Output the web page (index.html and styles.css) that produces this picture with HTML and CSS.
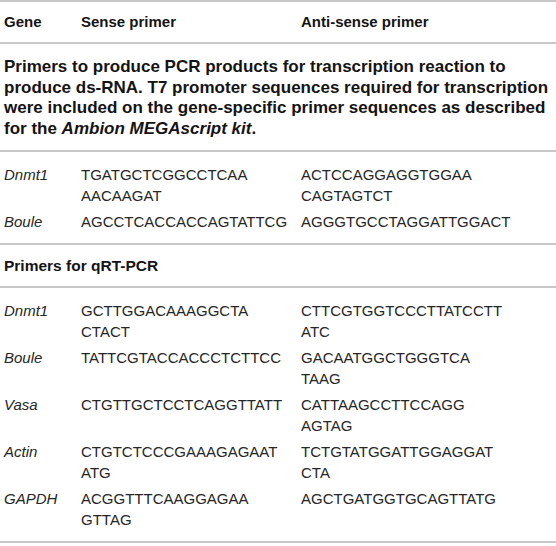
FILE: index.html
```html
<!DOCTYPE html>
<html lang="en">
<head>
<meta charset="utf-8">
<title>Primer table</title>
<link rel="stylesheet" href="styles.css">
</head>
<body>
<div class="table">
  <div class="row head">
    <div class="c1">Gene</div>
    <div class="c2">Sense primer</div>
    <div class="c3">Anti-sense primer</div>
  </div>
  <div class="section para">Primers to produce PCR products for transcription reaction to<br>produce ds-RNA. T7 promoter sequences required for transcription<br>were included on the gene-specific primer sequences as described<br>for the <em>Ambion MEGAscript kit</em>.</div>
  <div class="group">
    <div class="row">
      <div class="c1 gene">Dnmt1</div>
      <div class="c2">TGATGCTCGGCCTCAA<br>AACAAGAT</div>
      <div class="c3">ACTCCAGGAGGTGGAA<br>CAGTAGTCT</div>
    </div>
    <div class="row">
      <div class="c1 gene">Boule</div>
      <div class="c2">AGCCTCACCACCAGTATTCG</div>
      <div class="c3">AGGGTGCCTAGGATTGGACT</div>
    </div>
  </div>
  <div class="section title">Primers for qRT-PCR</div>
  <div class="group">
    <div class="row">
      <div class="c1 gene">Dnmt1</div>
      <div class="c2">GCTTGGACAAAGGCTA<br>CTACT</div>
      <div class="c3">CTTCGTGGTCCCTTATCCTT<br>ATC</div>
    </div>
    <div class="row">
      <div class="c1 gene">Boule</div>
      <div class="c2">TATTCGTACCACCCTCTTCC</div>
      <div class="c3">GACAATGGCTGGGTCA<br>TAAG</div>
    </div>
    <div class="row">
      <div class="c1 gene">Vasa</div>
      <div class="c2">CTGTTGCTCCTCAGGTTATT</div>
      <div class="c3">CATTAAGCCTTCCAGG<br>AGTAG</div>
    </div>
    <div class="row">
      <div class="c1 gene">Actin</div>
      <div class="c2">CTGTCTCCCGAAAGAGAAT<br>ATG</div>
      <div class="c3">TCTGTATGGATTGGAGGAT<br>CTA</div>
    </div>
    <div class="row">
      <div class="c1 gene">GAPDH</div>
      <div class="c2">ACGGTTTCAAGGAGAA<br>GTTAG</div>
      <div class="c3">AGCTGATGGTGCAGTTATG</div>
    </div>
  </div>
</div>
</body>
</html>
```

FILE: styles.css
```css
html, body {
  margin: 0;
  padding: 0;
  background: #ffffff;
}
body {
  font-family: "Liberation Sans", Arial, sans-serif;
  font-size: 15px;
  line-height: 21px;
  color: #262626;
}
.table {
  width: 556px;
  border-top: 2px solid #c8c8c8;
}
.row {
  display: grid;
  grid-template-columns: 77px 220px 1fr;
  padding: 0 4px;
}
.head {
  font-weight: bold;
  font-size: 15px;
  color: #141414;
  padding-top: 9px;
  padding-bottom: 10px;
  border-bottom: 2px solid #c8c8c8;
}
.section {
  font-weight: bold;
  color: #141414;
  padding-left: 4px;
  padding-right: 0;
  border-bottom: 2px solid #c8c8c8;
  white-space: nowrap;
}
.para {
  font-size: 17px;
  line-height: 20.5px;
  padding-top: 13px;
  padding-bottom: 11px;
}
.para em {
  font-style: italic;
}
.title {
  font-size: 15.5px;
  padding-top: 10px;
  padding-bottom: 10px;
}
.group {
  padding: 9px 0 9px 0;
  border-bottom: 2px solid #c8c8c8;
}
.group .row {
  padding-top: 2.5px;
  padding-bottom: 2.5px;
}
.gene {
  font-style: italic;
}
```
